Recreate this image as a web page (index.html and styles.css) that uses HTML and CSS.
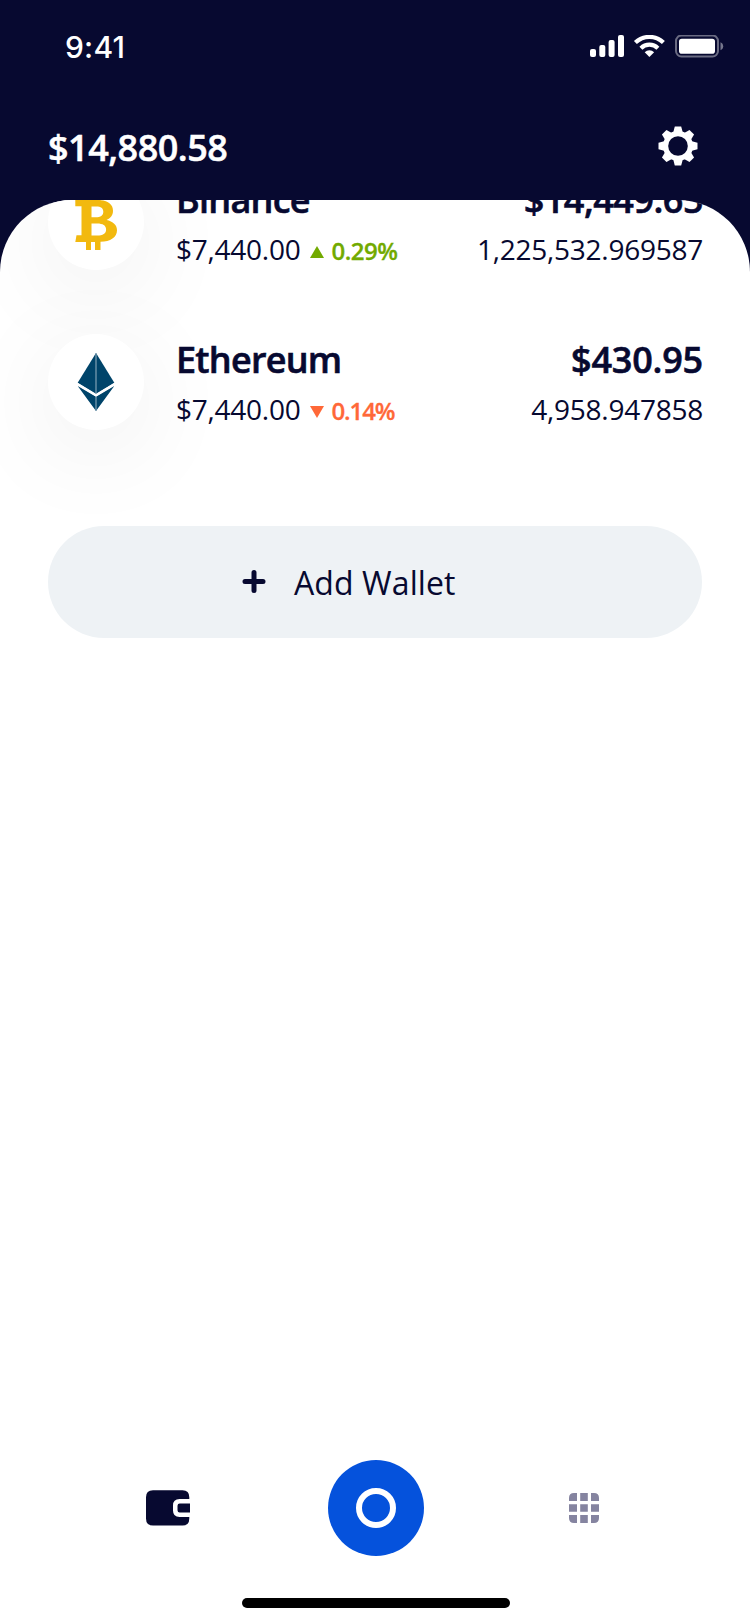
FILE: index.html
```html
<!DOCTYPE html>
<html lang="en">
<head>
<meta charset="utf-8">
<title>Wallet</title>
<link rel="stylesheet" href="styles.css">
</head>
<body>
<div class="screen">
  <header class="header">
    <div class="status">
      <span class="time">9:41</span>
      <svg class="status-icons" width="136" height="24" viewBox="0 0 136 24" fill="#fff">
        <rect x="0" y="14" width="6" height="8" rx="2"/>
        <rect x="9.3" y="10" width="6" height="12" rx="2"/>
        <rect x="18.6" y="5" width="6" height="17" rx="2"/>
        <rect x="28" y="0" width="6" height="22" rx="2"/>
        <g fill="none" stroke="#fff" stroke-width="4.2">
          <path d="M45.4 7.6a20 20 0 0 1 28 0"/>
          <path d="M50.9 13.2a12.1 12.1 0 0 1 17 0"/>
        </g>
        <path d="M54.7 17.2a6.8 6.8 0 0 1 9.4 0L59.4 22z"/>
        <rect x="86" y="0.5" width="42" height="21" rx="5.5" fill="none" stroke="#fff" stroke-opacity=".4" stroke-width="2"/>
        <rect x="89" y="3.7" width="36" height="15" rx="2.8"/>
        <path d="M130.5 7.3v8c1.7-.7 2.7-2.2 2.7-4s-1-3.300-2.700-4z" fill-opacity=".45"/>
      </svg>
    </div>
    <div class="topbar">
      <span class="balance">$14,880.58</span>
      <svg class="gear" width="40" height="40" viewBox="-20 -20 40 40">
        <g fill="#fff">
          <circle r="15"/>
          <path id="tooth" d="M-4.900-13L-3.200-19.500H3.200L4.900-13V13L3.200 19.500H-3.200L-4.900 13z"/>
          <use href="#tooth" transform="rotate(45)"/>
          <use href="#tooth" transform="rotate(90)"/>
          <use href="#tooth" transform="rotate(135)"/>
        </g>
        <circle class="gear-hole" r="9.800"/>
      </svg>
    </div>
  </header>

  <main class="panel">
    <div class="list">
      <div class="row">
        <div class="coin">
          <svg class="btc" width="44" height="54" viewBox="0 0 44 54">
            <path fill-rule="evenodd" d="M11 0h5v4h4V0h5.500v4.300c8 .6 12.500 4.400 12.500 10.500 0 4.700-2.600 7.700-6.500 9.200 6.500 1.300 10.500 5 10.500 10.200 0 7.200-6.500 11.200-16.500 11.600V54H20v-8h-4v8h-5v-8H.3L1.500 39.200h5V10.200H.3V4H11zM16.500 10.500v10.700h4.200c5 0 7.600-1.800 7.600-5.500 0-3.500-2.300-5.200-7.100-5.200zM16.500 27.500v12h5.600c5.800 0 9-2 9-6s-3.200-6-9-6z"/>
          </svg>
        </div>
        <div class="info">
          <div class="line"><span class="name">Binance</span><span class="value value-a">$14,449.65</span></div>
          <div class="line small">
            <span class="price"><span class="rate">$7,440.00</span>
              <svg width="14" height="14" viewBox="0 0 14 14" fill="#72aa00"><path d="M7 0l7 12H0z"/></svg>
              <span class="pct up">0.29%</span></span>
            <span class="amount">1,225,532.969587</span>
          </div>
        </div>
      </div>
      <div class="row">
        <div class="coin">
          <svg width="38" height="58" viewBox="0 0 38 58">
            <g fill="#00446a">
              <path d="M19 0l18.300 29.700L19 40.800.7 29.700z"/>
              <path d="M.7 33L19 43.800 37.300 33 19 58z"/>
            </g>
            <path d="M19 0v58" stroke="#7fa1b4" stroke-width="1.200"/>
            <path d="M.7 31.200L19 42.400l18.300-11.200" fill="none" stroke="#fff" stroke-width="2"/>
          </svg>
        </div>
        <div class="info">
          <div class="line"><span class="name">Ethereum</span><span class="value">$430.95</span></div>
          <div class="line small">
            <span class="price"><span class="rate">$7,440.00</span>
              <svg width="14" height="14" viewBox="0 0 14 14" fill="#ff6838"><path d="M0 0h14L7 12z"/></svg>
              <span class="pct down">0.14%</span></span>
            <span class="amount">4,958.947858</span>
          </div>
        </div>
      </div>
    </div>
    <button class="add">
      <svg width="24" height="24" viewBox="0 0 24 24" stroke="#070930" stroke-width="5" stroke-linecap="round"><path d="M12 2.500v18M3 11.500h18"/></svg>
      <span>Add Wallet</span>
    </button>
  </main>

  <nav class="nav">
    <svg width="44" height="36" viewBox="0 0 44 36" fill="#070930">
      <path d="M7 .3h29.500q6.800 0 6.800 7v1.700H33.500q-6.500 0-6.500 6.500v5q0 6.500 6.500 6.500h9.800v1.500q0 7-6.800 7H7q-7 0-7-7V7.300Q0 .3 7 .3z"/>
      <path d="M33.700 13.500H44v9H33.700q-2.200 0-2.200-2.200v-4.600q0-2.200 2.200-2.200z"/>
    </svg>
    <svg width="96" height="96" viewBox="0 0 96 96">
      <circle cx="48" cy="48" r="48" fill="#0552dc"/>
      <circle cx="48" cy="48" r="17" fill="none" stroke="#fff" stroke-width="6"/>
    </svg>
    <svg class="grid" width="30" height="30" viewBox="0 0 30 30" fill="#8584a0">
      <path d="M5 0h3v8H0V5q0-5 5-5zM11.200 0h7.600v8h-7.600zM22 0h3q5 0 5 5v3h-8zM0 11.200h8v7.600H0zM11.200 11.200h7.600v7.600h-7.600zM22 11.200h8v7.600h-8zM0 22h8v8H5q-5 0-5-5zM11.200 22h7.600v8h-7.600zM22 22h8v3q0 5-5 5h-3z"/>
    </svg>
  </nav>
  <div class="home"></div>
</div>
</body>
</html>
```

FILE: styles.css
```css
body {
  margin: 0;
  background: #070930;
}

.screen {
  width: 750px;
  height: 1624px;
  display: flex;
  flex-direction: column;
  background: linear-gradient(#070930 300px, #fff 300px);
  color: #070930;
  font-family: "Open Sans", "Noto Sans", sans-serif;
  overflow: hidden;
}

.header {
  height: 200px;
  color: #fff;
  flex: none;
}

.status {
  height: 93px;
  box-sizing: border-box;
  display: flex;
  justify-content: space-between;
  align-items: center;
  padding: 0 24px 0 65px;
}

.status-icons {
  margin-top: 1px;
}

.time {
  font: 500 30px/40px Inter, sans-serif;
  letter-spacing: 0.2px;
}

.topbar {
  height: 107px;
  display: flex;
  justify-content: space-between;
  align-items: center;
  box-sizing: border-box;
  padding: 0 52px 0 48px;
}

.balance {
  font-size: 36px;
  line-height: 48px;
  font-weight: 600;
  letter-spacing: -0.5px;
  padding-top: 2px;
  -webkit-text-stroke: 0.5px currentColor;
}

.gear {
  margin-bottom: 1px;
}

.gear-hole {
  fill: #070930;
}

.panel {
  flex: 1;
  min-height: 0;
  background: #fff;
  border-radius: 72px 72px 0 0;
  overflow: hidden;
  display: flex;
  flex-direction: column;
}

.list {
  margin-top: -26px;
  display: flex;
  flex-direction: column;
  gap: 64px;
}

.row {
  height: 96px;
  display: flex;
  gap: 32px;
  padding: 0 47px 0 48px;
}

.coin {
  width: 96px;
  height: 96px;
  flex: none;
  border-radius: 50%;
  background: #fff;
  box-shadow: 0 20px 100px rgba(0, 0, 0, 0.08);
  display: flex;
  align-items: center;
  justify-content: center;
}

.btc {
  fill: #f2b90f;
  margin: 2px 0 0 2px;
}

.info {
  flex: 1;
}

.line {
  display: flex;
  justify-content: space-between;
  align-items: baseline;
  height: 51px;
  line-height: 51px;
}

.name,
.value {
  font-size: 36px;
  font-weight: 600;
  letter-spacing: -0.75px;
  -webkit-text-stroke: 0.6px currentColor;
}

.value {
  letter-spacing: -0.2px;
}

.value-a {
  letter-spacing: -0.5px;
}

.small {
  height: 48px;
  line-height: 48px;
  font-size: 28px;
}

.rate,
.amount {
  letter-spacing: -0.25px;
}

.price {
  display: flex;
  align-items: baseline;
}

.price svg {
  margin: 0 7px 0 10px;
}

.pct {
  font-size: 24px;
  font-weight: 600;
  letter-spacing: -0.5px;
  -webkit-text-stroke: 0.3px currentColor;
}

.up {
  color: #72aa00;
}

.down {
  color: #ff6838;
  letter-spacing: -1.1px;
}

.add {
  margin: 96px 48px 0;
  height: 112px;
  flex: none;
  border: 0;
  border-radius: 56px;
  background: #eef2f5;
  color: inherit;
  font: 400 32px/44px "Open Sans", "Noto Sans", sans-serif;
  letter-spacing: 0.1px;
  display: flex;
  align-items: center;
  gap: 28px;
  padding: 0 0 0 194px;
}

.add span {
  padding-top: 1px;
}

.nav {
  height: 96px;
  flex: none;
  display: flex;
  align-items: center;
  gap: 138px;
  padding: 0 0 0 146px;
}

.grid {
  margin-left: 7px;
}

.home {
  width: 268px;
  height: 10px;
  flex: none;
  border-radius: 5px;
  background: #000;
  margin: 42px 0 16px 242px;
}
```
